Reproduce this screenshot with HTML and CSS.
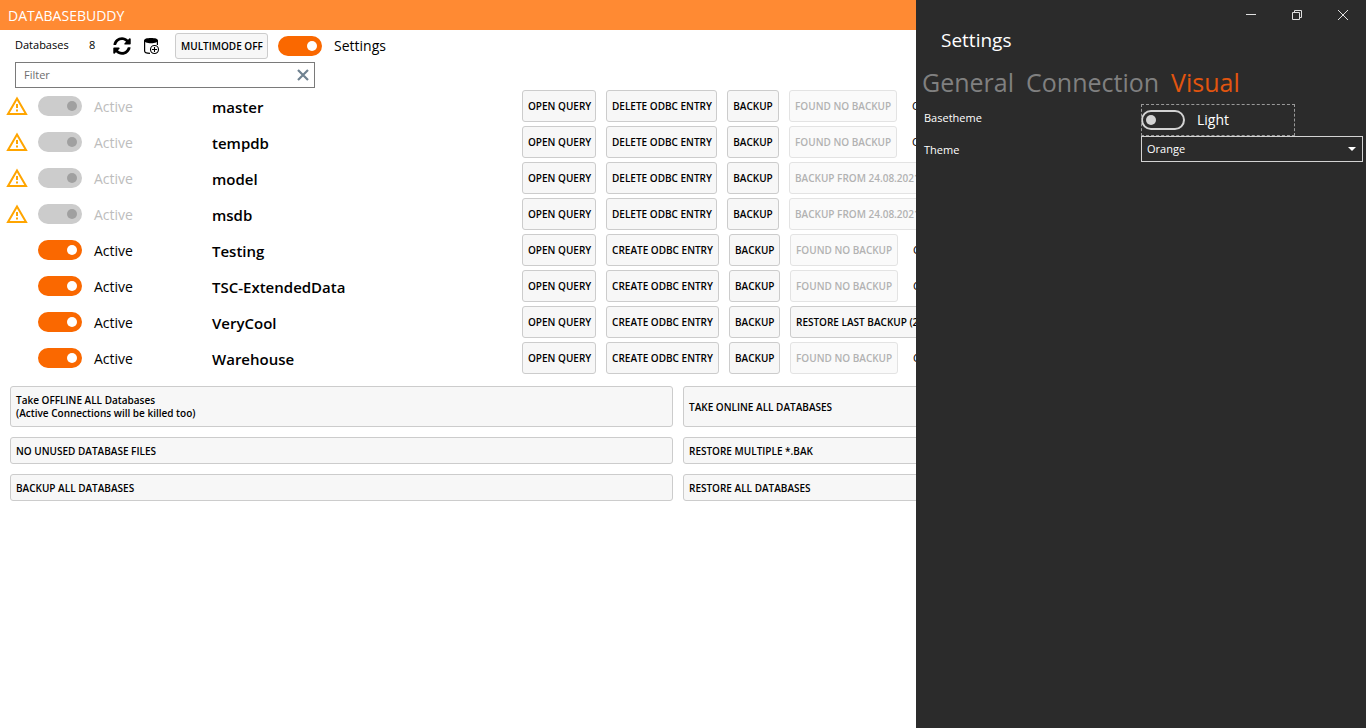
FILE: index.html
```html
<!DOCTYPE html>
<html lang="en">
<head>
<meta charset="utf-8">
<title>DatabaseBuddy</title>
<link rel="stylesheet" href="styles.css">
</head>
<body>
<svg class="defs" aria-hidden="true">
  <symbol id="warn" viewBox="0 0 22 20"><path d="M11 2.600 20 18H2z" fill="none" stroke="#ffa500" stroke-width="2"/><path d="M11 8v4M11 13.500v2" stroke="#ffa500" stroke-width="2"/></symbol>
</svg>
<div class="app">
  <header class="titlebar"><h1 class="app-name">DATABASEBUDDY</h1></header>
  <main class="main">
    <div class="toolbar">
      <span class="label">Databases</span>
      <span class="count">8</span>
      <button class="icon-btn" aria-label="Refresh"><svg width="18" height="18" viewBox="0 0 512 512"><path d="M370.700 133.300C339.500 104 298.900 88 255.800 88c-77.500.1-144.300 53.200-162.800 126.900-1.300 5.400-6.100 9.100-11.700 9.100H24.100c-7.500 0-13.200-6.800-11.800-14.200C33.900 94.900 134.800 8 256 8c66.400 0 126.800 26.100 171.300 68.700L463 41c15.100-15.100 41-4.400 41 17v134c0 13.300-10.700 24-24 24H346c-21.400 0-32.100-25.900-17-41zM32 296h134c21.400 0 32.100 25.900 17 41l-41.800 41.800C172.500 408 213.100 424 256.200 424c77.400-.1 144.200-53.200 162.800-126.800 1.300-5.400 6.100-9.100 11.700-9.100h57.300c7.500 0 13.200 6.800 11.800 14.200C478.100 417.100 377.200 504 256 504c-66.400 0-126.800-26.100-171.300-68.700L49 471c-15.100 15.100-41 4.400-41-17V320c0-13.300 10.700-24 24-24z"/></svg></button>
      <button class="icon-btn" aria-label="Add database"><svg width="17" height="18" viewBox="0 0 17 18"><path d="M1 3.500C1 1.800 4 1 8 1s7 .8 7 2.500S12 6.200 8 6.200 1 5.200 1 3.500z"/><path d="M1.600 3.500V14c0 1.600 2.400 2.300 5.400 2.400M14.400 3.500V8" fill="none" stroke="#000" stroke-width="1.200"/><circle cx="11.500" cy="12.500" r="4" fill="#fff" stroke="#000" stroke-width="1.100"/><path d="M11.500 10v5M9 12.500h5" stroke="#000" stroke-width="1.100"/></svg></button>
      <button class="btn multimode">MULTIMODE OFF</button>
      <label class="switch-label"><input type="checkbox" class="switch" checked>Settings</label>
    </div>
    <div class="filter">
      <input class="filter-input" type="text" placeholder="Filter" aria-label="Filter">
      <button class="clear" aria-label="Clear filter"><svg width="12" height="12" viewBox="0 0 12 12"><path d="m1 1 10 10M11 1 1 11" stroke="#6f8291" stroke-width="2.200"/></svg></button>
    </div>
    <ul class="rows">
      <li class="row"><svg class="warn"><use href="#warn"/></svg><label class="switch-label off"><input type="checkbox" class="switch" checked disabled><span class="caption">Active</span></label><span class="name">master</span><div class="actions"><button class="btn open">OPEN QUERY</button><button class="btn delete">DELETE ODBC ENTRY</button><button class="btn backup">BACKUP</button><button class="btn found" disabled>FOUND NO BACKUP</button><span class="status">C</span></div></li>
      <li class="row"><svg class="warn"><use href="#warn"/></svg><label class="switch-label off"><input type="checkbox" class="switch" checked disabled><span class="caption">Active</span></label><span class="name">tempdb</span><div class="actions"><button class="btn open">OPEN QUERY</button><button class="btn delete">DELETE ODBC ENTRY</button><button class="btn backup">BACKUP</button><button class="btn found" disabled>FOUND NO BACKUP</button><span class="status">C</span></div></li>
      <li class="row"><svg class="warn"><use href="#warn"/></svg><label class="switch-label off"><input type="checkbox" class="switch" checked disabled><span class="caption">Active</span></label><span class="name">model</span><div class="actions"><button class="btn open">OPEN QUERY</button><button class="btn delete">DELETE ODBC ENTRY</button><button class="btn backup">BACKUP</button><button class="btn" disabled>BACKUP FROM 24.08.2021</button></div></li>
      <li class="row"><svg class="warn"><use href="#warn"/></svg><label class="switch-label off"><input type="checkbox" class="switch" checked disabled><span class="caption">Active</span></label><span class="name">msdb</span><div class="actions"><button class="btn open">OPEN QUERY</button><button class="btn delete">DELETE ODBC ENTRY</button><button class="btn backup">BACKUP</button><button class="btn" disabled>BACKUP FROM 24.08.2021</button></div></li>
      <li class="row"><label class="switch-label"><input type="checkbox" class="switch" checked><span class="caption">Active</span></label><span class="name">Testing</span><div class="actions"><button class="btn open">OPEN QUERY</button><button class="btn create">CREATE ODBC ENTRY</button><button class="btn backup-narrow">BACKUP</button><button class="btn found" disabled>FOUND NO BACKUP</button><span class="status">C</span></div></li>
      <li class="row"><label class="switch-label"><input type="checkbox" class="switch" checked><span class="caption">Active</span></label><span class="name">TSC-ExtendedData</span><div class="actions"><button class="btn open">OPEN QUERY</button><button class="btn create">CREATE ODBC ENTRY</button><button class="btn backup-narrow">BACKUP</button><button class="btn found" disabled>FOUND NO BACKUP</button><span class="status">C</span></div></li>
      <li class="row"><label class="switch-label"><input type="checkbox" class="switch" checked><span class="caption">Active</span></label><span class="name">VeryCool</span><div class="actions"><button class="btn open">OPEN QUERY</button><button class="btn create">CREATE ODBC ENTRY</button><button class="btn backup-narrow">BACKUP</button><button class="btn">RESTORE LAST BACKUP (24.08.2021)</button></div></li>
      <li class="row"><label class="switch-label"><input type="checkbox" class="switch" checked><span class="caption">Active</span></label><span class="name">Warehouse</span><div class="actions"><button class="btn open">OPEN QUERY</button><button class="btn create">CREATE ODBC ENTRY</button><button class="btn backup-narrow">BACKUP</button><button class="btn found" disabled>FOUND NO BACKUP</button><span class="status">C</span></div></li>
    </ul>
    <div class="bulk">
      <button class="btn wide">Take OFFLINE ALL Databases<br>(Active Connections will be killed too)</button>
      <button class="btn wide">TAKE ONLINE ALL DATABASES</button>
      <button class="btn wide">NO UNUSED DATABASE FILES</button>
      <button class="btn wide">RESTORE MULTIPLE *.BAK</button>
      <button class="btn wide">BACKUP ALL DATABASES</button>
      <button class="btn wide">RESTORE ALL DATABASES</button>
    </div>
  </main>
  <aside class="flyout">
    <div class="window-controls">
      <button class="win-btn" aria-label="Minimize"><svg width="12" height="12" viewBox="0 0 12 12"><path d="M1 5.500h10"/></svg></button>
      <button class="win-btn" aria-label="Restore"><svg width="12" height="12" viewBox="0 0 12 12"><path d="M1.500 3.500h7v7h-7zM3.500 3.500v-2h7v7h-2"/></svg></button>
      <button class="win-btn" aria-label="Close"><svg width="12" height="12" viewBox="0 0 12 12"><path d="m1 1 10 10M11 1 1 11"/></svg></button>
    </div>
    <h2 class="flyout-title">Settings</h2>
    <div class="tabs" role="tablist">
      <button class="tab" role="tab">General</button>
      <button class="tab" role="tab">Connection</button>
      <button class="tab selected" role="tab" aria-selected="true">Visual</button>
    </div>
    <div class="form">
      <label class="field-label" for="base">Basetheme</label>
      <label class="switch-label focus"><input type="checkbox" class="switch" id="base">Light</label>
      <label class="field-label" for="theme">Theme</label>
      <div class="select-box"><select class="select" id="theme"><option>Orange</option></select><svg class="arrow" width="8" height="4" viewBox="0 0 8 4"><path d="M0 0h8L4 4z" fill="#fff"/></svg></div>
    </div>
  </aside>
</div>
</body>
</html>
```
FILE: styles.css
```css
* { box-sizing: border-box; }
body {
  margin: 0;
  font-family: "Open Sans", "Noto Sans", sans-serif;
  font-size: 11px;
  line-height: 16px;
  color: #000;
  background: #fff;
}
button, input, select { font: inherit; color: inherit; }
button { padding: 0; border: 0; background: none; }
.defs { position: absolute; width: 0; height: 0; }
.app { position: relative; min-height: 100vh; overflow: hidden; }
.titlebar { display: flex; align-items: center; height: 30px; padding: 2px 8px 0; background: #ff8a33; color: #fff; }
.app-name { margin: 0; font-size: 14px; font-weight: 400; }

.btn {
  flex: none;
  height: 32px;
  padding: 0 5px;
  border: 1px solid #ccc;
  border-radius: 3px;
  background: #f7f7f7;
  font-size: 10px;
  font-weight: 600;
  line-height: 13px;
  white-space: nowrap;
}
.btn:disabled { border-color: #e3e3e3; background: #fafafa; color: #b2b2b2; }

.toolbar { display: flex; align-items: center; height: 32px; padding-left: 15px; }
.label { width: 74px; padding-bottom: 2px; }
.count { width: 24px; padding-bottom: 2px; }
.icon-btn { display: flex; width: 30px; }
.multimode { width: 93px; height: 26px; margin: 0 10px 0 2px; }

.switch-label { display: flex; align-items: center; gap: 12px; font-size: 14px; line-height: 20px; }
.off { color: #bdbdbd; }
.switch {
  appearance: none;
  display: flex;
  align-items: center;
  width: 44px;
  height: 20px;
  margin: 0;
  padding: 0 3px;
  border: 2px solid #d3d3d3;
  border-radius: 10px;
}
.switch::before { content: ""; width: 10px; height: 10px; border-radius: 5px; background: #d3d3d3; }
.switch:checked { justify-content: flex-end; border-color: #fa6800; background: #fa6800; }
.switch:checked::before { background: #fff; }
.switch:disabled { border-color: #ccc; background: #ccc; }
.switch:disabled::before { background: #a0a0a0; }

.filter { display: flex; align-items: center; width: 300px; height: 26px; margin-left: 15px; padding: 0 5px 0 8px; border: 1px solid #7a7a7a; }
.filter-input { flex: 1; min-width: 0; padding: 0; border: 0; outline: 0; background: none; }
.filter-input::placeholder { color: #6e6e6e; opacity: 1; }
.clear { display: flex; }

.rows { margin: 0; padding: 0; list-style: none; }
.row { display: grid; grid-template-columns: 32px 174px 310px max-content; align-items: center; height: 36px; padding-left: 6px; }
.row .switch-label { grid-column: 2; }
.caption { padding-top: 2px; }
.warn { width: 22px; height: 20px; }
.name { padding-top: 2px; font-size: 15px; font-weight: 600; line-height: 20px; }
.actions { display: flex; align-items: center; gap: 10px; }
.open { width: 74px; }
.delete { width: 111px; }
.create { width: 113px; }
.backup { width: 52px; }
.backup-narrow { width: 51px; }
.found { width: 108px; }
.status { padding-left: 5px; }

.bulk { display: grid; grid-template-columns: 1fr 1fr; gap: 10px; padding: 10px 20px 10px 10px; }
.wide { height: auto; padding: 7px 5px 5px; text-align: left; }
.wide:nth-child(-n+2) { padding-bottom: 6px; }

.flyout { position: absolute; top: 0; right: 0; bottom: 0; width: 450px; background: #2b2b2b; color: #fff; }
.window-controls { display: flex; justify-content: flex-end; height: 30px; }
.win-btn { display: flex; align-items: center; justify-content: center; width: 46px; height: 30px; }
.win-btn svg { fill: none; stroke: #e0e0e0; }
.flyout-title { margin: 0; padding-left: 25px; font-size: 19px; font-weight: 400; line-height: 20px; }
.tabs { display: flex; gap: 12px; padding: 15px 6px 4px; }
.tab { color: #808080; font-size: 25px; line-height: 35px; }
.selected { color: #e2550f; }
.form { display: grid; grid-template-columns: 217px 1fr; padding: 0 3px 0 8px; }
.field-label { padding-top: 6px; }
.focus { width: 154px; height: 32px; outline: 1px dashed #999; outline-offset: -1px; }
.select-box { display: grid; align-items: center; height: 26px; border: 1px solid #d3d3d3; }
.select { grid-area: 1 / 1; width: 100%; padding: 0 5px; appearance: none; border: 0; background: none; outline: 0; }
.arrow { grid-area: 1 / 1; justify-self: end; margin-right: 6px; pointer-events: none; }
```
